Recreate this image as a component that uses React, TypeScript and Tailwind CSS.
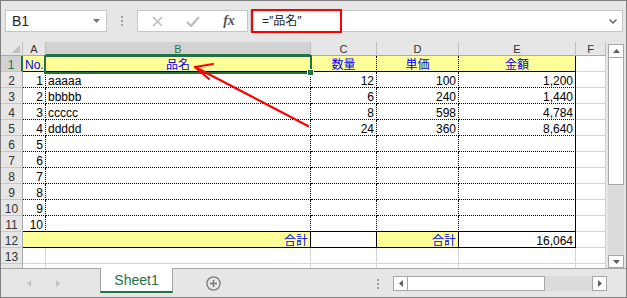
import React from "react";

type Bd = "dot" | "solid" | "grid";
type Cell = { t?: string; a?: "l" | "c" | "r"; y?: boolean; blue?: boolean; r: Bd; b: Bd; span?: boolean };

const RIGHT: Record<Bd, string> = {
  dot: "border-r-black [border-right-style:dotted]",
  solid: "border-r-black",
  grid: "border-r-[#d4d4d4]",
};
const BOTTOM: Record<Bd, string> = {
  dot: "border-b-black [border-bottom-style:dotted]",
  solid: "border-b-black",
  grid: "border-b-[#d4d4d4]",
};
const ALIGN = { l: "text-left", c: "text-center", r: "text-right" };

const items = [
  ["aaaaa", "12", "100", "1,200"],
  ["bbbbb", "6", "240", "1,440"],
  ["ccccc", "8", "598", "4,784"],
  ["ddddd", "24", "360", "8,640"],
];

function buildRows(): Cell[][] {
  const grid: Cell = { r: "grid", b: "grid" };
  const rows: Cell[][] = [];
  rows.push([
    { t: "No.", a: "c", y: true, blue: true, r: "dot", b: "solid" },
    { t: "品名", a: "c", y: true, blue: true, r: "dot", b: "solid" },
    { t: "数量", a: "c", y: true, blue: true, r: "dot", b: "solid" },
    { t: "単価", a: "c", y: true, blue: true, r: "dot", b: "solid" },
    { t: "金額", a: "c", y: true, blue: true, r: "solid", b: "solid" },
    grid,
  ]);
  for (let i = 1; i <= 10; i++) {
    const it = items[i - 1];
    const b: Bd = i === 10 ? "solid" : "dot";
    rows.push([
      { t: String(i), a: "r", r: "dot", b },
      { t: it?.[0], a: "l", r: "dot", b },
      { t: it?.[1], a: "r", r: "dot", b },
      { t: it?.[2], a: "r", r: "dot", b },
      { t: it?.[3], a: "r", r: "solid", b },
      grid,
    ]);
  }
  rows.push([
    { t: "合計", a: "r", y: true, blue: true, r: "solid", b: "solid", span: true },
    { r: "solid", b: "solid" },
    { t: "合計", a: "r", y: true, blue: true, r: "solid", b: "solid" },
    { t: "16,064", a: "r", r: "solid", b: "solid" },
    grid,
  ]);
  rows.push([grid, grid, grid, grid, grid, grid]);
  // partly hidden row under the visible area
  rows.push([grid, grid, grid, grid, grid, grid]);
  return rows;
}

function Dots() {
  return (
    <div className="flex flex-col gap-[2px]">
      <div className="w-[2px] h-[2px] bg-[#a0a0a0]" />
      <div className="w-[2px] h-[2px] bg-[#a0a0a0]" />
      <div className="w-[2px] h-[2px] bg-[#a0a0a0]" />
    </div>
  );
}

function Tri({ dir, color }: { dir: "up" | "down" | "left" | "right"; color: string }) {
  const d = {
    up: "M0 4L3.5 0L7 4Z",
    down: "M0 0L7 0L3.5 4Z",
    left: "M4 0L4 7L0 3.5Z",
    right: "M0 0L0 7L4 3.5Z",
  }[dir];
  const vertical = dir === "up" || dir === "down";
  return (
    <svg width={vertical ? 7 : 4} height={vertical ? 4 : 7}>
      <path d={d} fill={color} />
    </svg>
  );
}

export default function App() {
  const rows = buildRows();
  return (
    <div className="w-[627px] h-[298px] border border-[#7f7f7f] bg-[#e6e6e6] flex flex-col overflow-hidden font-['Liberation_Sans','Noto_Sans_CJK_JP',sans-serif]">
      {/* Formula bar */}
      <div className="h-[41px] flex items-start pt-[9px] pl-[4px]">
        <div className="w-[102px] h-[22px] bg-white border border-[#c6c6c6] flex items-center justify-between pl-[6px] pr-[6px]">
          <span className="text-[14px] text-[#222] leading-none">B1</span>
          <Tri dir="down" color="#777" />
        </div>
        <div className="w-[30px] h-[22px] flex items-center justify-center">
          <Dots />
        </div>
        <div className="w-[111px] h-[22px] bg-white border border-[#c6c6c6] flex items-center pl-[1px]">
          <div className="w-[36px] flex justify-center">
            <svg width="11" height="11">
              <path d="M1 1L10 10M10 1L1 10" stroke="#bdbdbd" strokeWidth="1.6" />
            </svg>
          </div>
          <div className="w-[36px] flex justify-center">
            <svg width="14" height="11">
              <path d="M1 6L5 10L13 1" stroke="#bdbdbd" strokeWidth="2.2" fill="none" />
            </svg>
          </div>
          <div className="w-[36px] flex justify-center">
            <span className="font-['Liberation_Serif',serif] italic font-bold text-[14px] text-[#555] leading-none">fx</span>
          </div>
        </div>
        <div className="relative ml-[2px] w-[373px] h-[22px] bg-white border border-[#c6c6c6] flex items-center justify-between pl-[11px] pr-[5px]">
          <span className="text-[12px] text-[#222] leading-none">=″品名″</span>
          <svg width="8" height="5">
            <path d="M0.5 0.5L4 4L7.5 0.5" stroke="#666" strokeWidth="1.5" fill="none" />
          </svg>
          <div className="absolute left-0 top-[-2px] w-[91px] h-[24px] border-2 border-[#ff0000]" />
        </div>
      </div>

      {/* Sheet area */}
      <div className="flex h-[226px]">
        <div className="relative w-[605px] h-[226px] overflow-hidden">
          <div className="grid grid-cols-[22px_23px_265px_66px_82px_117px_30px]">
            <div className="h-[14px] bg-[#e6e6e6] border-r border-b border-r-[#bfbfbf] border-b-[#ababab] flex items-end justify-end pr-[2px] pb-[2px]">
              <svg width="8" height="8">
                <path d="M8 0L8 8L0 8Z" fill="#bdbdbd" />
              </svg>
            </div>
            {["A", "B", "C", "D", "E", "F"].map((h) => (
              <div
                key={h}
                className={
                  h === "B"
                    ? "h-[14px] bg-[#d2d2d2] border-r border-b-2 border-r-[#bfbfbf] border-b-[#217346] text-center text-[11px] text-[#217346] pt-[1px] leading-[13px]"
                    : "h-[14px] bg-[#e6e6e6] border-r border-b border-r-[#bfbfbf] border-b-[#ababab] text-center text-[11px] text-[#333] pt-[1px] leading-[13px]"
                }
              >
                {h}
              </div>
            ))}
            {rows.map((row, ri) => (
              <React.Fragment key={ri}>
                <div
                  className={
                    ri === 0
                      ? "h-[16px] bg-[#d2d2d2] border-r-2 border-b border-r-[#217346] border-b-[#c6c6c6] text-center text-[12px] text-[#217346] pt-[2px] leading-[15px]"
                      : "h-[16px] bg-[#e6e6e6] border-r border-b border-r-[#ababab] border-b-[#c6c6c6] text-center text-[12px] text-[#333] pt-[2px] leading-[15px]"
                  }
                >
                  {ri < 13 ? ri + 1 : ""}
                </div>
                {row.map((c, ci) => (
                  <div
                    key={ci}
                    className={`h-[16px] border-r border-b px-[2px] pt-[2px] leading-[15px] text-[12px] whitespace-nowrap ${RIGHT[c.r]} ${BOTTOM[c.b]} ${c.y ? "bg-[#ffff99]" : "bg-white"} ${c.blue ? "text-[#0000ff]" : "text-black"} ${ALIGN[c.a ?? "l"]} ${c.span ? "col-span-2" : ""}`}
                  >
                    {c.t}
                  </div>
                ))}
              </React.Fragment>
            ))}
          </div>

          {/* selection */}
          <div className="absolute left-[43px] top-[13px] w-[268px] h-[19px] border-2 border-[#217346]" />
          <div className="absolute left-[306px] top-[27px] w-[7px] h-[7px] bg-[#217346] border border-white" />

          {/* arrow */}
          <svg className="absolute left-0 top-0 pointer-events-none" width="605" height="226">
            <g stroke="#ff0000" strokeWidth="2.2" strokeLinecap="round" fill="none">
              <path d="M307 84L194 25" />
              <path d="M194 25L212 22" />
              <path d="M194 25L208 37" />
            </g>
          </svg>
        </div>
        <div className="w-[2px]" />
        <div className="w-[16px] flex flex-col pt-[2px]">
          <div className="h-[14px] bg-white border border-[#a6a6a6] flex items-center justify-center">
            <Tri dir="up" color="#606060" />
          </div>
          <div className="h-[127px] bg-white border-x border-b border-[#a6a6a6]" />
          <div className="h-[70px] bg-[#dcdcdc]" />
          <div className="h-[13px] bg-white border border-[#a6a6a6] flex items-center justify-center">
            <Tri dir="down" color="#606060" />
          </div>
        </div>
      </div>

      {/* Sheet tabs */}
      <div className="flex-1 flex items-start border-t border-[#a6a6a6]">
        <div className="w-[99px] h-[28px] flex items-center">
          <div className="ml-[26px]">
            <Tri dir="left" color="#c3c3c3" />
          </div>
          <div className="ml-[25px]">
            <Tri dir="right" color="#c3c3c3" />
          </div>
        </div>
        <div className="-mt-px w-[73px] h-[25px] bg-white border-x border-[#a6a6a6] border-b-2 border-b-[#217346] flex items-center justify-center">
          <span className="text-[14px] text-[#217346] leading-none">Sheet1</span>
        </div>
        <div className="ml-[33px] mt-[7px]">
          <svg width="15" height="15">
            <circle cx="7.5" cy="7.5" r="6.6" stroke="#7a7a7a" strokeWidth="1.3" fill="none" />
            <path d="M7.5 4V11M4 7.5H11" stroke="#7a7a7a" strokeWidth="1.5" />
          </svg>
        </div>
        <div className="ml-[156px] mt-[10px]">
          <Dots />
        </div>
        <div className="ml-[14px] mt-[7px] flex h-[15px]">
          <div className="w-[15px] bg-white border border-[#a6a6a6] flex items-center justify-center">
            <Tri dir="left" color="#606060" />
          </div>
          <div className="w-[137px] bg-white border-y border-r border-[#a6a6a6]" />
          <div className="w-[47px] bg-[#dcdcdc]" />
          <div className="w-[15px] bg-white border border-[#a6a6a6] flex items-center justify-center">
            <Tri dir="right" color="#606060" />
          </div>
        </div>
      </div>
    </div>
  );
}
